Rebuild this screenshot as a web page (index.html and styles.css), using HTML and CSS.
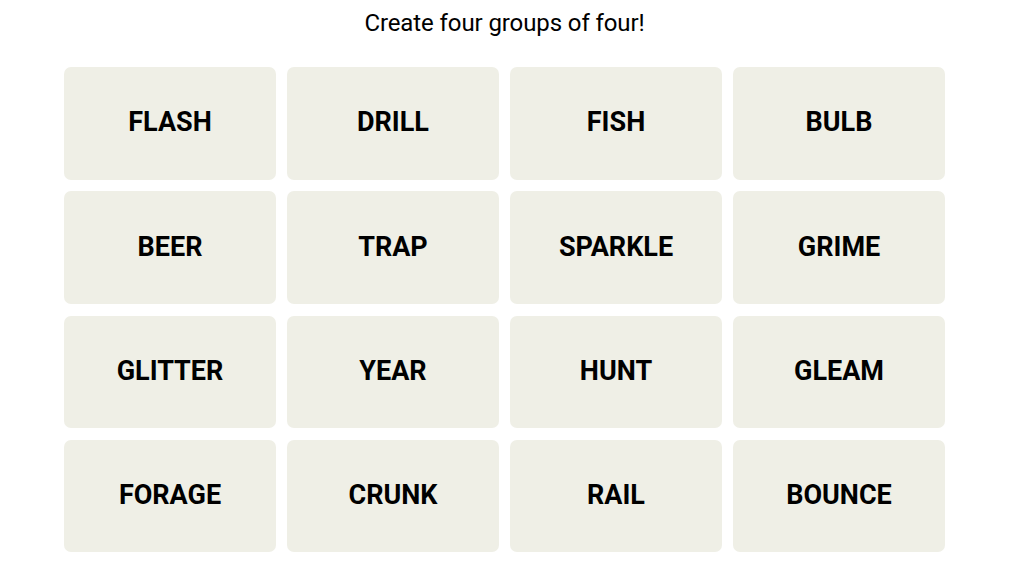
FILE: index.html
```html
<!DOCTYPE html>
<html lang="en">
<head>
<meta charset="utf-8">
<title>Connections</title>
<link rel="stylesheet" href="styles.css">
</head>
<body>
<main class="game">
  <p class="prompt">Create four groups of four!</p>
  <div class="board">
    <button class="tile">FLASH</button>
    <button class="tile">DRILL</button>
    <button class="tile">FISH</button>
    <button class="tile">BULB</button>
    <button class="tile">BEER</button>
    <button class="tile">TRAP</button>
    <button class="tile">SPARKLE</button>
    <button class="tile">GRIME</button>
    <button class="tile">GLITTER</button>
    <button class="tile">YEAR</button>
    <button class="tile">HUNT</button>
    <button class="tile">GLEAM</button>
    <button class="tile">FORAGE</button>
    <button class="tile">CRUNK</button>
    <button class="tile">RAIL</button>
    <button class="tile">BOUNCE</button>
  </div>
</main>
</body>
</html>
```
FILE: styles.css
```css
html, body {
  margin: 0;
  padding: 0;
  background: #ffffff;
}
body {
  font-family: Roboto, "Liberation Sans", sans-serif;
  color: #000;
}
.game {
  width: 881px;
  margin-left: 64px;
  display: flex;
  flex-direction: column;
  align-items: center;
}
.prompt {
  margin: 9px 0 0;
  height: 28px;
  line-height: 28px;
  font-size: 24px;
  font-weight: 400;
  letter-spacing: -0.1px;
}
.board {
  margin-top: 30px;
  width: 100%;
  display: grid;
  grid-template-columns: repeat(4, 212px);
  grid-template-rows: repeat(4, 112.5px);
  column-gap: 11px;
  row-gap: 11.8px;
}
.tile {
  border: none;
  border-radius: 7px;
  background: #efefe6;
  color: #000;
  font-family: Roboto, "Liberation Sans", sans-serif;
  font-weight: 700;
  font-size: 27px;
  padding: 0 0 2px;
  display: flex;
  align-items: center;
  justify-content: center;
}
```
